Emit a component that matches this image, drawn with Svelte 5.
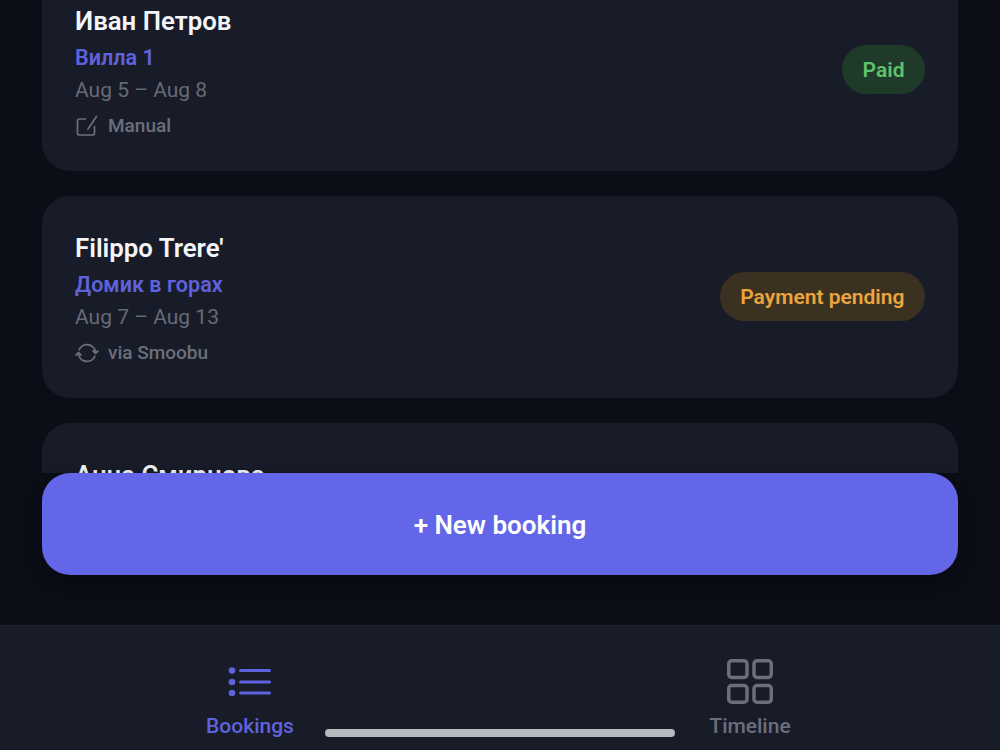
<script>
	const bookings = [
		{ name: "Иван Петров", place: "Вилла 1", dates: "Aug 5 – Aug 8", source: "Manual", icon: "edit", status: "Paid", tone: "paid" },
		{ name: "Filippo Trere'", place: "Домик в горах", dates: "Aug 7 – Aug 13", source: "via Smoobu", icon: "sync", status: "Payment pending", tone: "pending" },
		{ name: "Анна Смирнова", place: "Вилла 2", dates: "Aug 9 – Aug 12", source: "Manual", icon: "edit", status: "Paid", tone: "paid" }
	];
</script>

<div class="screen">
	<div class="list-clip">
		<div class="list">
			{#each bookings as b}
				<div class="card">
					<div class="info">
						<div class="name">{b.name}</div>
						<div class="place">{b.place}</div>
						<div class="dates">{b.dates}</div>
						<div class="source">
							{#if b.icon === "edit"}
								<svg width="24" height="24" viewBox="0 0 24 24" fill="none" stroke="currentColor" stroke-width="1.7" stroke-linecap="round" stroke-linejoin="round">
									<path d="M10.500 5H4.500a2 2 0 0 0-2 2v12a2 2 0 0 0 2 2h13a2 2 0 0 0 2-2v-6.500" />
									<path d="M13 15 21.500 2.500" />
								</svg>
							{:else}
								<svg width="24" height="24" viewBox="0 0 24 24" fill="none" stroke="currentColor" stroke-width="1.8" stroke-linecap="round" stroke-linejoin="round">
									<path d="M4.200 8.700A8.500 8.500 0 0 1 20.500 12" />
									<path d="M18.200 10 20.500 12.300 22.800 10" />
									<path d="M19.800 15.300A8.500 8.500 0 0 1 3.500 12" />
									<path d="M1.200 14 3.500 11.700 5.800 14" />
								</svg>
							{/if}
							<span>{b.source}</span>
						</div>
					</div>
					<div class="badge {b.tone}">{b.status}</div>
				</div>
			{/each}
		</div>
	</div>

	<div class="action">
		<button class="new">+ New booking</button>
	</div>

	<nav class="tabs">
		<div class="tab active">
			<svg width="48" height="48" viewBox="0 0 48 48" fill="currentColor">
				<circle cx="6" cy="12.500" r="3.300" />
				<circle cx="6" cy="24" r="3.300" />
				<circle cx="6" cy="35" r="3.300" />
				<rect x="13" y="11" width="32" height="3" rx="1.500" />
				<rect x="13" y="22.500" width="32" height="3" rx="1.500" />
				<rect x="13" y="33.500" width="32" height="3" rx="1.500" />
			</svg>
			<span>Bookings</span>
		</div>
		<div class="tab">
			<svg width="48" height="48" viewBox="0 0 48 48" fill="none" stroke="currentColor" stroke-width="3.500">
				<rect x="2.750" y="2.750" width="18.250" height="16.750" rx="3" />
				<rect x="28" y="2.750" width="17.250" height="16.750" rx="3" />
				<rect x="2.750" y="27.500" width="18.250" height="16.750" rx="3" />
				<rect x="28" y="27.500" width="17.250" height="16.750" rx="3" />
			</svg>
			<span>Timeline</span>
		</div>
		<div class="home-bar"></div>
	</nav>
</div>

<style>
	:global(body) {
		margin: 0;
		background: #0b0d17;
	}
	.screen {
		width: 1000px;
		height: 750px;
		overflow: hidden;
		display: flex;
		flex-direction: column;
		background: #0b0d17;
		font-family: Roboto, "Noto Sans", sans-serif;
	}
	.list-clip {
		height: 473px;
		flex: none;
		overflow: hidden;
	}
	.list {
		display: flex;
		flex-direction: column;
		gap: 25px;
		margin-top: -31px;
		padding: 0 42px;
	}
	.card {
		height: 202px;
		flex: none;
		box-sizing: border-box;
		padding: 0 33px;
		display: flex;
		align-items: center;
		justify-content: space-between;
		background: #181c28;
		border-radius: 28px;
	}
	.info {
		display: flex;
		flex-direction: column;
		padding-top: 4px;
	}
	.name {
		font-size: 25.800px;
		font-weight: 600;
		line-height: 32px;
		color: #f4f5f8;
	}
	.place {
		margin-top: 7px;
		font-size: 21.600px;
		font-weight: 600;
		line-height: 28px;
		color: #5f62dd;
	}
	.dates {
		margin-top: 4px;
		font-size: 21px;
		line-height: 28px;
		color: #666a76;
	}
	.source {
		margin-top: 8px;
		display: flex;
		align-items: center;
		gap: 9px;
		height: 28px;
		font-size: 19px;
		font-weight: 500;
		color: #6b6f7b;
	}
	.badge {
		box-sizing: border-box;
		height: 49px;
		margin-top: -2px;
		padding: 2px 20.500px 0;
		border-radius: 25px;
		display: flex;
		align-items: center;
		font-size: 21px;
		font-weight: 600;
	}
	.paid {
		background: #1f3a29;
		color: #5ec26f;
	}
	.pending {
		background: #3b3120;
		color: #eba53d;
	}
	.action {
		height: 152px;
		flex: none;
		padding: 0 42px;
	}
	.new {
		width: 100%;
		height: 102px;
		padding: 2px 0 0;
		border: 0;
		border-radius: 28px;
		background: #6366e8;
		color: #fff;
		font-family: inherit;
		font-size: 26px;
		font-weight: 600;
		box-shadow: 0 6px 20px rgba(0, 0, 0, 0.3);
	}
	.tabs {
		position: relative;
		flex: 1;
		display: grid;
		grid-template-columns: 1fr 1fr;
		background: #181c28;
		border-top: 1px solid #232632;
	}
	.tab {
		display: flex;
		flex-direction: column;
		align-items: center;
		padding-top: 32px;
		gap: 6px;
		font-size: 21px;
		line-height: 28px;
		font-weight: 500;
		color: #6b6f7b;
	}
	.tab.active {
		color: #5f62dd;
	}
	.home-bar {
		position: absolute;
		left: 325px;
		bottom: 13px;
		width: 350px;
		height: 8px;
		border-radius: 4px;
		background: #b8b9bf;
	}
</style>
